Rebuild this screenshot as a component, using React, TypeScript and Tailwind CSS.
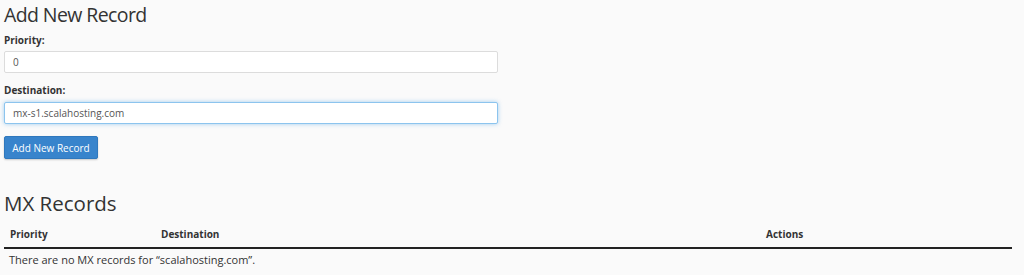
import React from "react";

export default function App() {
  return (
    <div
      className="min-h-[275px] w-[1024px] bg-[#fafafa] px-[4px] text-[#333]"
      style={{ fontFamily: '"Open Sans", "Noto Sans", sans-serif' }}
    >
      <h1 className="m-0 text-[19.5px] font-normal leading-[30px] tracking-[-0.6px] text-[#333]">Add New Record</h1>
      <label className="mt-[3px] block text-[10px] font-bold leading-[14px]">Priority:</label>
      <input
        readOnly
        value="0"
        className="mt-[4px] block h-[22px] w-[494px] rounded-[2px] border border-[#dcdcdc] bg-white px-[8px] text-[10px] text-[#555] outline-none"
      />
      <label className="mt-[10px] block text-[10px] font-bold leading-[14px]">Destination:</label>
      <input
        readOnly
        value="mx-s1.scalahosting.com"
        className="mt-[5px] block h-[22px] w-[494px] rounded-[2px] border border-[#8cc4ee] bg-white px-[8px] text-[10px] text-[#555] shadow-[0_0_4px_rgba(102,175,233,0.6)] outline-none"
      />
      <button className="mt-[12px] block h-[23px] w-[94px] rounded-[2px] border border-[#2f78bd] bg-[#3884cc] text-[10px] leading-none text-white shadow-[0_1px_2px_rgba(0,0,0,0.2)]">
        Add New Record
      </button>
      <h2 className="mt-[29px] text-[20.5px] font-normal leading-[30px] text-[#333]">MX Records</h2>
      <div className="w-[1008px]">
        <div className="flex border-b-2 border-[#222] pt-[9px] pb-[6px] text-[10px] font-bold leading-[14px]">
          <div className="w-[157px] pl-[6px]">Priority</div>
          <div className="w-[605px]">Destination</div>
          <div className="flex-1">Actions</div>
        </div>
        <div className="pl-[5px] pt-[3px] text-[11px] leading-[15px]">
          There are no MX records for “scalahosting.com”.
        </div>
      </div>
    </div>
  );
}
